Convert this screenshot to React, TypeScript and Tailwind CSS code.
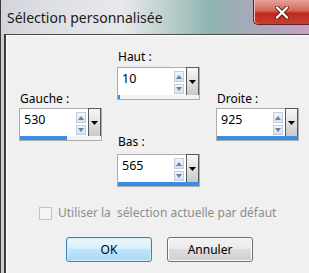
import React from 'react';

interface FieldProps {
  label: string;
  value: string;
  fill: string;
  className?: string;
  labelGap?: string;
}

function SpinField({ label, value, fill, className = '', labelGap = 'mb-px' }: FieldProps) {
  return (
    <div className={`flex flex-col ${className}`}>
      <span className={`h-4 leading-4 pl-px text-[12px] text-black ${labelGap}`}>{label}</span>
      <div className="w-[83px] h-[33px] flex flex-col border border-[#acacac] bg-white">
        <div className="flex flex-1 min-h-0">
          <div className="flex-1 pl-[4px] pt-[3px] text-[12.5px] leading-4 text-black">{value}</div>
          {/* spin arrows */}
          <div className="w-[10px] flex flex-col gap-[2px] pt-[3px] mr-[2px]">
            <div className="h-[11px] flex items-center justify-center border border-[#c3cddb] bg-[linear-gradient(#f2f6fb,#d6e0ee)]">
              <svg width="6" height="4" viewBox="0 0 6 4">
                <path d="M0 4 L3 0 L6 4 Z" fill="#6a7fa6" />
              </svg>
            </div>
            <div className="h-[10px] flex items-center justify-center border border-[#c3cddb] bg-[linear-gradient(#f2f6fb,#d6e0ee)]">
              <svg width="6" height="4" viewBox="0 0 6 4">
                <path d="M0 0 L6 0 L3 4 Z" fill="#6a7fa6" />
              </svg>
            </div>
          </div>
          {/* dropdown */}
          <div className="w-[13px] -mt-px flex items-center justify-center border border-b-0 border-[#595959] bg-[linear-gradient(#f7f7f7,#dcdcdc_60%,#c9c9c9)]">
            <svg width="7" height="4" viewBox="0 0 7 4">
              <path d="M0 0 L7 0 L3.5 4 Z" fill="#000" />
            </svg>
          </div>
        </div>
        <div className="h-[4px] bg-[#f3f3f3]">
          <div className="h-full bg-[#3b8de3]" style={{ width: fill }} />
        </div>
      </div>
    </div>
  );
}

export default function App() {
  return (
    <div className="w-[309px] h-[273px] overflow-hidden flex flex-col font-['Noto_Sans',sans-serif] bg-[#c9c9cd]">
      {/* title bar */}
      <div className="h-[34px] shrink-0 flex items-start border-l border-[#3a3a3a] bg-[linear-gradient(90deg,#d3d5db_0%,#dfe1e5_20%,#e6e8ea_40%,#b9cdca_55%,#8fb4b0_68%,#a4aab8_80%,#c7a1c3_100%)]">
        <span className="flex-1 pl-[6px] pt-[8px] text-[14px] leading-5 text-[#1a1a1a]">
          Sélection personnalisée
        </span>
        <div className="w-[56px] h-[25px] shrink-0 flex items-center justify-center rounded-bl-[5px] border border-t-0 border-r-0 border-[#5a2a2a] bg-[linear-gradient(#e6a497,#d4665a_45%,#c0291b_55%,#c8402f)] shadow-[inset_1px_0_0_#f2c0b6]">
          <svg width="14" height="13" viewBox="0 0 14 13">
            <path d="M2 1.5 L12 11.5 M12 1.5 L2 11.5" stroke="#5b1a14" strokeWidth="4" strokeLinecap="round" />
            <path d="M2 1.5 L12 11.5 M12 1.5 L2 11.5" stroke="#ffffff" strokeWidth="2.4" strokeLinecap="round" />
          </svg>
        </div>
      </div>

      {/* body */}
      <div className="flex flex-1 min-h-0">
        <div className="w-[6px] shrink-0 border-l border-r-2 border-[#3b3b3b] bg-[#cfcfd2]" />
        <div className="flex-1 flex flex-col border-t border-[#4a4a4a] bg-[#f0f0f0] shadow-[inset_1px_1px_0_#ffffff]">
          <div className="flex items-start pl-[13px]">
            <SpinField label="Gauche :" value="530" fill="47px" className="pt-[56px]" />
            <div className="flex flex-col ml-[15px] pt-[14px]">
              <SpinField label="Haut :" value="10" fill="2px" labelGap="mb-[2px]" />
              <SpinField label="Bas :" value="565" fill="100%" className="mt-[34px]" labelGap="mb-[4px]" />
            </div>
            <SpinField label="Droite :" value="925" fill="100%" className="ml-[16px] pt-[56px]" />
          </div>

          <div className="flex items-center h-4 mt-[18px] pl-[33px]">
            <div className="w-[13px] h-[13px] border border-[#c4c4c4] bg-[#f4f4f4]" />
            <span className="ml-[6px] text-[12px] text-[#8d8d8d] whitespace-pre">Utiliser la  sélection actuelle par défaut</span>
          </div>

          <div className="flex gap-[15px] mt-[16px] pl-[60px]">
            <button className="w-[86px] h-[25px] rounded-[3px] border border-[#3c7fb1] bg-[linear-gradient(#eaf6fd,#d9f0fc_45%,#bee6fd_50%,#a7d9f5)] shadow-[inset_0_0_0_1px_#d7eefa] text-[12px] text-black">
              OK
            </button>
            <button className="w-[86px] h-[25px] rounded-[3px] border border-[#707070] bg-[linear-gradient(#f2f2f2,#ebebeb_45%,#dddddd_50%,#cfcfcf)] shadow-[inset_0_0_0_1px_#fcfcfc] text-[12px] text-black">
              Annuler
            </button>
          </div>
        </div>
      </div>
    </div>
  );
}
